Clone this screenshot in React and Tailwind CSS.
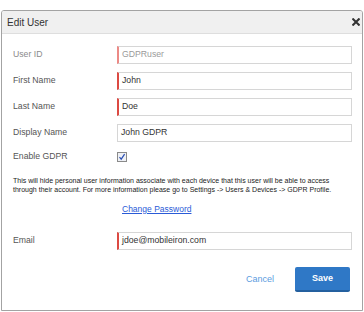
const font = { fontFamily: "'Liberation Sans', Arial, sans-serif" };

function Field({ label, value, required, disabled }) {
  return (
    <div className="flex items-center h-[18px] mb-[8px]">
      <div className={`w-[115px] pl-[11px] text-[8.7px] ${disabled ? 'text-[#8a8a8a]' : 'text-[#555]'}`}>{label}</div>
      <div
        className={`w-[235px] h-[18px] flex items-center pl-[3px] border border-[#d6d6d6] text-[8.7px]
          ${required ? (disabled ? 'border-l-2 border-l-[#ec8a86]' : 'border-l-2 border-l-[#dc4a43]') : ''}
          ${disabled ? 'text-[#9a9a9a]' : 'text-[#333]'}`}
      >
        {value}
      </div>
    </div>
  );
}

export default function App() {
  return (
    <div className="w-[364px] h-[312px] bg-white pt-[10px] pl-[1px] pr-[1px]" style={font}>
      <div className="h-[301px] border border-[#a3a3a3] rounded-t-[3px] overflow-hidden">
        {/* Header */}
        <div className="h-[23px] bg-[#f0f0f0] border-b border-[#dedede] flex items-center justify-between pl-[5px] pr-[2px]">
          <span className="text-[10px] text-[#333]">Edit User</span>
          <svg width="8" height="8" viewBox="0 0 10 10">
            <path d="M1.5 1.5 L8.5 8.5 M8.5 1.5 L1.5 8.5" stroke="#333" strokeWidth="2.6" strokeLinecap="square" />
          </svg>
        </div>

        {/* Body */}
        <div className="pt-[12px]">
          <Field label="User ID" value="GDPRuser" required disabled />
          <Field label="First Name" value="John" required />
          <Field label="Last Name" value="Doe" required />
          <Field label="Display Name" value="John GDPR" />

          <div className="flex items-center h-[14px] mt-[8px]">
            <div className="w-[115px] pl-[11px] text-[8.7px] text-[#555]">Enable GDPR</div>
            <div className="w-[10px] h-[10px] border border-[#8a8a8a] bg-[#eef0f5] flex items-center justify-center">
              <svg width="8" height="8" viewBox="0 0 8 8">
                <path d="M1.5 4.2 L3.2 6.2 L6.6 1.2" stroke="#2b4fb3" strokeWidth="1.2" fill="none" />
              </svg>
            </div>
          </div>

          <p className="pl-[11px] pr-[4px] mt-[12px] text-[7px] leading-[9px] text-[#222] whitespace-nowrap">
            This will hide personal user information associate with each device that this user will be able to access
            <br />
            through their account. For more information please go to Settings -&gt; Users &amp; Devices -&gt; GDPR Profile.
          </p>

          <div className="pl-[120px] mt-[9px] text-[8.5px] text-[#2a5bd7] underline">Change Password</div>

          <div className="mt-[16px]">
            <Field label="Email" value="jdoe@mobileiron.com" required />
          </div>

          <div className="flex items-center justify-end pr-[12px] mt-[17px]">
            <span className="text-[9px] text-[#5b9be0] mr-[21px]">Cancel</span>
            <div className="w-[55px] h-[25px] rounded-[2px] bg-[#2f78c6] border-b-2 border-[#24609f] flex items-center justify-center text-[9px] font-bold text-white">
              Save
            </div>
          </div>
        </div>
      </div>
    </div>
  );
}
